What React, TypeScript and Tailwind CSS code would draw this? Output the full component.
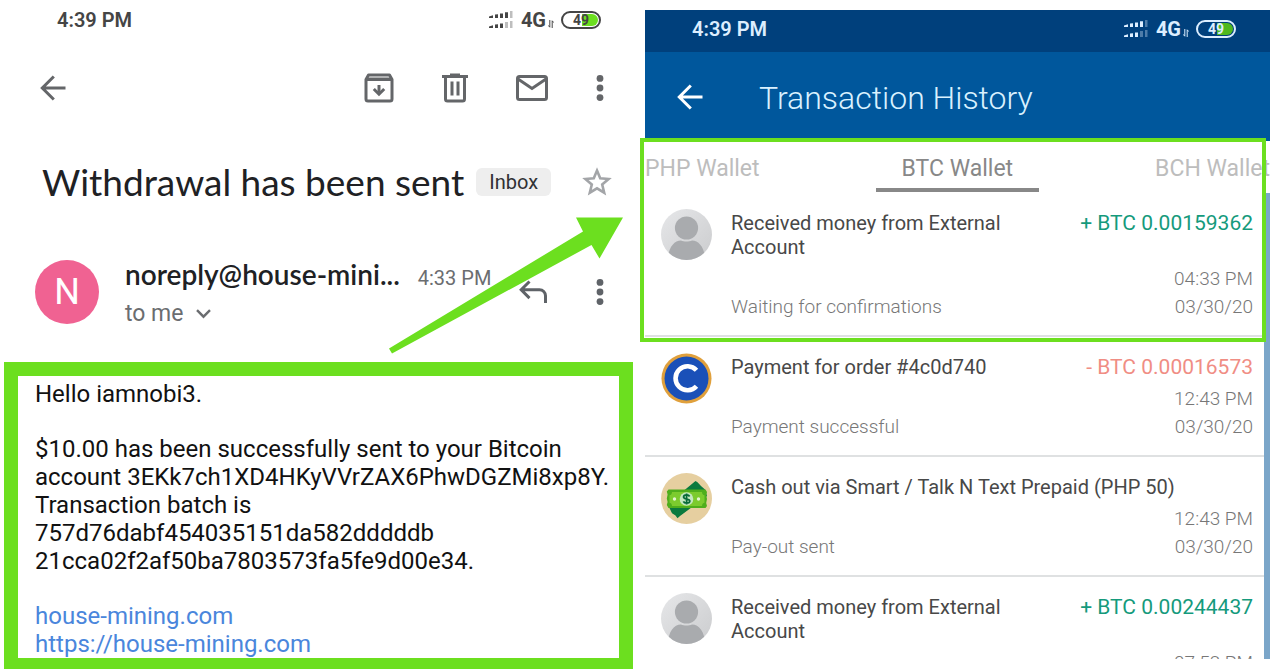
import clsx from "clsx";
import { ReactNode } from "react";

const SignalIcon = () => (
    <svg width="24" height="18" viewBox="0 0 24 18" fill="currentColor">
        <path d="M0 5.5l4-1.2V7H0zM6 3.6l3-.4V7H6zM11 2.6h3V7h-3zM16 1.2h3V7h-3z" />
        <path d="M0 15.500l4-1.200V17H0zM6 13.600l3-.4V17H6zM11 12.600h3V17h-3z" />
        <path d="M21 0h2.500v7H21zM16 11h3v6h-3zM21 10h2.500v7H21z" opacity=".35" />
    </svg>
);

const DataIcon = () => (
    <svg
        width="6"
        height="8"
        viewBox="0 0 6 8"
        fill="none"
        stroke="currentColor"
        strokeWidth="1"
    >
        <path d="M1.8 0v7.2L.2 5.4M4.2 8V.8l1.600 1.800" />
    </svg>
);

type StatusBarProps = {
    className: string;
    fillClassName: string;
};

const StatusBar = ({ className, fillClassName }: StatusBarProps) => (
    <div className={clsx("flex items-center", className)}>
        <span className="mr-auto text-xl font-semibold leading-6">4:39 PM</span>
        <SignalIcon />
        <span className="ml-2 text-xl font-bold leading-6">4G</span>
        <span className="ml-[2px] mt-2">
            <DataIcon />
        </span>
        <span className="relative ml-[7px] flex h-[18px] w-10 items-center justify-center rounded-full border-2 border-current">
            <span
                className={clsx(
                    "absolute inset-y-px right-px w-4 rounded-r-full",
                    fillClassName,
                )}
            />
            <span className="relative text-sm font-bold leading-none">49</span>
        </span>
    </div>
);

const BackIcon = () => (
    <svg
        width="26"
        height="26"
        viewBox="0 0 26 26"
        fill="none"
        stroke="currentColor"
        strokeWidth="3"
    >
        <path d="M25.5 13H3M13.8 1.5L2.3 13l11.5 11.5" />
    </svg>
);

const ArchiveIcon = () => (
    <svg
        width="30"
        height="30"
        viewBox="0 0 30 30"
        fill="none"
        stroke="currentColor"
        strokeWidth="3"
        strokeLinejoin="round"
    >
        <path d="M2 6.5V26a2 2 0 0 0 2 2h22a2 2 0 0 0 2-2V6.5L25.5 2h-21z" />
        <path d="M3 5h24v2.500H3z" fill="currentColor" strokeWidth="1" />
        <path d="M15 12v7" strokeLinejoin="miter" />
        <path
            d="M9.800 16l5.200 5.200 5.200-5.200"
            strokeLinejoin="miter"
        />
    </svg>
);

const TrashIcon = () => (
    <svg
        width="26"
        height="30"
        viewBox="0 0 26 30"
        fill="none"
        stroke="currentColor"
        strokeWidth="3"
    >
        <path d="M0 3.5h26M8 2h10M3.5 3.5V26a2 2 0 0 0 2 2h15a2 2 0 0 0 2-2V3.5M10 8.5v14M16 8.5v14" />
    </svg>
);

const MailIcon = () => (
    <svg
        width="32"
        height="26"
        viewBox="0 0 32 26"
        fill="none"
        stroke="currentColor"
        strokeWidth="3"
    >
        <rect x="1.5" y="1.5" width="29" height="23" rx="2" />
        <path d="M2 4l14 9.5L30 4" />
    </svg>
);

const MoreIcon = () => (
    <svg width="8" height="26" viewBox="0 0 8 26" fill="currentColor">
        <circle cx="4" cy="3.4" r="3.4" />
        <circle cx="4" cy="13" r="3.4" />
        <circle cx="4" cy="22.6" r="3.4" />
    </svg>
);

const StarIcon = () => (
    <svg
        width="30"
        height="30"
        viewBox="0 0 30 30"
        fill="none"
        stroke="currentColor"
        strokeWidth="2.6"
    >
        <path d="M15 3.6l3.2 7.7 8.4.7-6.4 5.5 2 8.2-7.2-4.4-7.2 4.4 2-8.2L3.4 12l8.4-.7z" />
    </svg>
);

const ReplyIcon = () => (
    <svg
        width="29"
        height="24"
        viewBox="0 0 29 24"
        fill="none"
        stroke="currentColor"
        strokeWidth="3"
    >
        <path d="M10.5 1.5L2.2 9.8l8.3 8.3M2.5 9.8h18a6 6 0 0 1 6 6V23" />
    </svg>
);

const ChevronIcon = () => (
    <svg
        width="15"
        height="10"
        viewBox="0 0 15 10"
        fill="none"
        stroke="currentColor"
        strokeWidth="2.4"
    >
        <path d="M1 1.2l6.5 6.5L14 1.2" />
    </svg>
);

const PersonAvatar = () => (
    <svg width="51" height="51" viewBox="0 0 51 51">
        <defs>
            <clipPath id="person">
                <circle cx="25.5" cy="25.5" r="25.5" />
            </clipPath>
            <linearGradient id="personBg" x1="0" y1="0" x2="1" y2="1">
                <stop offset="0" stopColor="#e6e7e9" />
                <stop offset="1" stopColor="#cbccce" />
            </linearGradient>
        </defs>
        <g clipPath="url(#person)">
            <rect width="51" height="51" fill="url(#personBg)" />
            <circle cx="25.5" cy="19" r="11.6" fill="#a9abae" />
            <path
                d="M7 51c0-12 6-19.5 13-19.5 3 1.3 8 1.3 11 0 7 0 13 7.5 13 19.5z"
                fill="#a9abae"
            />
        </g>
    </svg>
);

const CoinAvatar = () => (
    <svg width="51" height="51" viewBox="0 0 51 51">
        <circle cx="25.5" cy="25.5" r="25" fill="#e0a03c" />
        <circle cx="25.5" cy="25.5" r="22" fill="#1a50b8" />
        <path
            d="M35.500 17.200a12 12 0 1 0 0 16"
            fill="none"
            stroke="#fff"
            strokeWidth="4.6"
        />
    </svg>
);

const CashAvatar = () => (
    <svg width="51" height="51" viewBox="0 0 51 51">
        <circle cx="25.5" cy="25.5" r="25.5" fill="#e6cfa0" />
        <path
            d="M23 17.500L34.5 8l2 1.200L40 13l4 3.5 2 6.5-27 20-2.500 2.200-2-2.700-3.5-2.300-2.500-5.200z"
            fill="#0b7a3e"
        />
        <path
            d="M7.500 16.500h37l1.500 2.500-.8 3.500.8 3.500-.8 4 .8 3-1.500 2h-37L5.800 32l.8-3-.8-3.500.8-4-.8-3z"
            fill="#4fae1c"
        />
        <path
            d="M11 19h30c0 2 1 3 2.500 3.200v7.600C42 30 41 31 41 33H11c0-2-1-3-2.500-3.200v-7.600C10 22 11 21 11 19z"
            fill="#7ccb2e"
        />
        <circle cx="25.5" cy="26" r="6.8" fill="#c4e8c0" />
        <circle cx="13.500" cy="26" r="1.700" fill="#e4f5d0" />
        <circle cx="37.500" cy="26" r="1.700" fill="#e4f5d0" />
        <path
            d="M28.600 23.500c-.6-1.200-1.700-1.600-3-1.600-1.800 0-3 .8-3 2.100 0 3 6.200 1.200 6.200 4.100 0 1.400-1.300 2.100-3.200 2.100-1.600 0-2.700-.6-3.200-1.800M25.600 20.500v11"
            fill="none"
            stroke="#086a3a"
            strokeWidth="1.8"
        />
    </svg>
);

type IconButtonProps = {
    label: string;
    className?: string;
    children: ReactNode;
};

const IconButton = ({ label, className, children }: IconButtonProps) => (
    <button aria-label={label} className={clsx("shrink-0", className)}>
        {children}
    </button>
);

const MailPanel = () => (
    <section className="relative flex min-w-0 flex-col">
        <StatusBar
            className="h-10 pl-[57px] pr-[39px] text-[#454545]"
            fillClassName="bg-[#6cdf1f]"
        />
        <div className="flex h-24 items-center pl-10 pr-9 text-[#646669]">
            <IconButton label="Back" className="mr-auto">
                <BackIcon />
            </IconButton>
            <IconButton label="Archive">
                <ArchiveIcon />
            </IconButton>
            <IconButton label="Delete" className="ml-12">
                <TrashIcon />
            </IconButton>
            <IconButton label="Mark as unread" className="ml-12">
                <MailIcon />
            </IconButton>
            <IconButton label="More" className="ml-12">
                <MoreIcon />
            </IconButton>
        </div>
        <div className="flex h-[92px] items-center pl-[42px] pr-7">
            <h1 className="whitespace-nowrap font-['Lato',sans-serif] text-[37px] leading-10 text-[#202124]">
                Withdrawal has been sent
            </h1>
            <span className="ml-3 rounded-md bg-[#eeeeee] px-[13px] text-xl leading-7 text-[#303134]">
                Inbox
            </span>
            <IconButton label="Star" className="ml-auto text-[#a3a5a8]">
                <StarIcon />
            </IconButton>
        </div>
        <div className="mb-[10px] flex h-[124px] items-center pl-[35px] pr-9 pt-1">
            <div className="flex size-16 shrink-0 items-center justify-center rounded-full bg-[#f06292] text-4xl text-white">
                N
            </div>
            <div className="ml-[26px] min-w-0 pt-1">
                <div className="flex items-baseline whitespace-nowrap">
                    <span className="font-['Lato',sans-serif] text-[28px] font-semibold leading-9 text-[#202124]">
                        noreply@house-mini...
                    </span>
                    <span className="ml-[18px] text-xl text-[#6b6d70]">
                        4:33 PM
                    </span>
                </div>
                <button className="mt-1 flex items-center gap-3 text-[23px] leading-9 text-[#6b6d70]">
                    to me
                    <ChevronIcon />
                </button>
            </div>
            <IconButton label="Reply" className="ml-auto text-[#5f6368]">
                <ReplyIcon />
            </IconButton>
            <IconButton label="More" className="ml-12 text-[#5f6368]">
                <MoreIcon />
            </IconButton>
        </div>
        <article className="ml-1 mr-[7px] flex-1 border-[14px] border-b-[11px] border-[#6cdf1f] pl-[17px] pt-1 text-2xl leading-7 text-[#111111]">
            <p>Hello iamnobi3.</p>
            <p className="mt-[27px]">
                $10.00 has been successfully sent to your Bitcoin
                <br />
                account 3EKk7ch1XD4HKyVVrZAX6PhwDGZMi8xp8Y.
                <br />
                Transaction batch is
                <br />
                757d76dabf454035151da582dddddb
                <br />
                21cca02f2af50ba7803573fa5fe9d00e34.
            </p>
            <p className="mt-[27px] flex flex-col items-start text-[#4a86dc]">
                <a href="#house-mining">house-mining.com</a>
                <a href="#house-mining">https://house-mining.com</a>
            </p>
        </article>
        {/* arrow from the message to the matching transaction */}
        <svg
            className="pointer-events-none absolute left-[388px] top-[216px]"
            width="236"
            height="138"
            viewBox="0 0 236 138"
            fill="#6cdf1f"
        >
            <path d="M188 1.500h47L211.500 42.500 203.500 29 4 137.500 1 132.500 195 15.500z" />
        </svg>
    </section>
);

type TransactionData = {
    avatar: ReactNode;
    title: string;
    amount?: string;
    time: string;
    date?: string;
    status?: string;
};

const transactions: TransactionData[] = [
    {
        avatar: <PersonAvatar />,
        title: "Received money from External Account",
        amount: "+ BTC 0.00159362",
        time: "04:33 PM",
        date: "03/30/20",
        status: "Waiting for confirmations",
    },
    {
        avatar: <CoinAvatar />,
        title: "Payment for order #4c0d740",
        amount: "- BTC 0.00016573",
        time: "12:43 PM",
        date: "03/30/20",
        status: "Payment successful",
    },
    {
        avatar: <CashAvatar />,
        title: "Cash out via Smart / Talk N Text Prepaid (PHP 50)",
        time: "12:43 PM",
        date: "03/30/20",
        status: "Pay-out sent",
    },
    {
        avatar: <PersonAvatar />,
        title: "Received money from External Account",
        amount: "+ BTC 0.00244437",
        time: "07:52 PM",
    },
];

const Transaction = ({ transaction }: { transaction: TransactionData }) => {
    const { avatar, title, amount, time, date, status } = transaction;

    return (
        <li className="flex items-start gap-[19px] border-b-2 border-[#dfe1e2] pb-[14px] pl-4 pr-[17px] pt-4">
            <div className="shrink-0">{avatar}</div>
            <div className="min-w-0 flex-1 pt-[2px]">
                <div className="flex items-start justify-between gap-4 text-xl leading-6">
                    <h2 className="text-[#484848]">{title}</h2>
                    {amount && (
                        <span
                            className={clsx(
                                "shrink-0 text-[21px]",
                                amount.startsWith("+")
                                    ? "text-[#159a7c]"
                                    : "text-[#f08d84]",
                            )}
                        >
                            {amount}
                        </span>
                    )}
                </div>
                <div className="mt-[6px] text-right text-[19px] font-light leading-7 text-[#777777]">
                    <div>{time}</div>
                    <div className="flex justify-between">
                        <span>{status}</span>
                        <span>{date}</span>
                    </div>
                </div>
            </div>
        </li>
    );
};

const WalletPanel = () => (
    <section className="relative my-[10px] ml-[5px] mr-[10px] min-w-0">
        <div className="flex h-full flex-col overflow-hidden">
            <StatusBar
                className="h-[42px] shrink-0 bg-[#00407c] pb-1 pl-[47px] pr-[34px] text-[#dceeff]"
                fillClassName="bg-[#4fb81f]"
            />
            <header className="flex h-[89px] shrink-0 items-center bg-[#00579c] pl-8">
                <IconButton label="Back" className="text-white">
                    <BackIcon />
                </IconButton>
                <h1 className="ml-14 pt-[2px] text-[32px] font-light leading-10 text-[#d9f1ff]">
                    Transaction History
                </h1>
            </header>
            <nav className="mb-px flex h-[51px] shrink-0 items-stretch justify-between text-[23px] leading-7 text-[#bdbdbd]">
                <button className="pt-1">PHP Wallet</button>
                <button className="border-b-4 border-[#888888] px-[26px] pt-2 text-[#888888]">
                    BTC Wallet
                </button>
                <button className="pt-1">BCH Wallet</button>
            </nav>
            <ul>
                {transactions.map((transaction, i) => (
                    <Transaction key={i} transaction={transaction} />
                ))}
            </ul>
        </div>
        {/* scroll bar */}
        <div className="absolute bottom-0 right-0 top-[183px] w-[6px] bg-[#7ba6c9]" />
        {/* frame around the matching transaction */}
        <div className="pointer-events-none absolute -left-[5px] right-1 top-32 h-[204px] border-4 border-[#6cdf1f]" />
    </section>
);

const App = () => (
    <main className="grid h-screen grid-cols-2 grid-rows-[minmax(0,1fr)] overflow-hidden bg-white font-['Roboto',sans-serif]">
        <MailPanel />
        <WalletPanel />
    </main>
);

export default App;
